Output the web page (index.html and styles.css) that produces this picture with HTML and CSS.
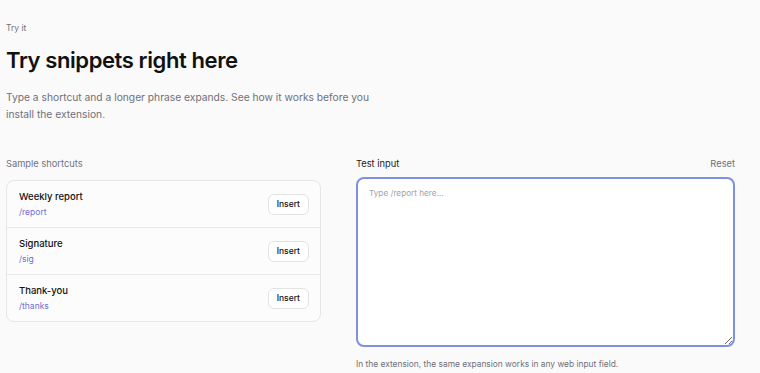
FILE: index.html
```html
<!DOCTYPE html>
<html lang="en">
<head>
    <meta charset="UTF-8">
    <meta name="viewport" content="width=device-width, initial-scale=1.0">
    <title>Try snippets</title>
    <link rel="stylesheet" href="styles.css">
</head>

<body>

<section class="intro">
    <p class="eyebrow">Try it</p>
    <h1>Try snippets right here</h1>
    <p class="lead">Type a shortcut and a longer phrase expands. See how it works before you install the extension.</p>
</section>

<section class="playground">
    <div class="samples">
        <div class="col-head">
            <span class="muted">Sample shortcuts</span>
        </div>
        <div class="shortcut-list">
            <div class="shortcut">
                <div>
                    <div class="shortcut-name">Weekly report</div>
                    <div class="shortcut-key">/report</div>
                </div>
                <button class="insert-button">Insert</button>
            </div>
            <div class="shortcut">
                <div>
                    <div class="shortcut-name">Signature</div>
                    <div class="shortcut-key">/sig</div>
                </div>
                <button class="insert-button">Insert</button>
            </div>
            <div class="shortcut">
                <div>
                    <div class="shortcut-name">Thank-you</div>
                    <div class="shortcut-key">/thanks</div>
                </div>
                <button class="insert-button">Insert</button>
            </div>
        </div>
    </div>

    <div class="tester">
        <div class="col-head">
            <span class="label">Test input</span>
            <button class="reset-button">Reset</button>
        </div>
        <textarea class="test-area" placeholder="Type /report here..."></textarea>
        <p class="hint">In the extension, the same expansion works in any web input field.</p>
    </div>
</section>

</body>
</html>
```

FILE: styles.css
```css
/* General Styles */
body {
    font-family: Inter, "Noto Sans", sans-serif;
    margin: 0;
    padding: 21px 25px 0 6px;
    background-color: #fafafa;
    color: #111;
}

.eyebrow {
    margin: 0;
    font-size: 8.5px;
    line-height: 14px;
    color: #6b6f7a;
}

h1 {
    margin: 11px 0 0;
    font-size: 22px;
    line-height: 28px;
    font-weight: 600;
    letter-spacing: -0.4px;
}

.lead {
    margin: 15px 0 0;
    max-width: 375px;
    font-size: 10.25px;
    line-height: 17px;
    color: #6f7079;
}

.playground {
    display: grid;
    grid-template-columns: 315px 1fr;
    gap: 35px;
    margin-top: 33px;
}

.col-head {
    display: flex;
    justify-content: space-between;
    align-items: center;
    height: 14px;
    font-size: 9.3px;
}

.muted {
    color: #707380;
}

.label {
    color: #1a1a1a;
}

.reset-button {
    border: none;
    background: none;
    padding: 0;
    font-family: inherit;
    font-size: 9.3px;
    color: #6f7079;
    cursor: pointer;
}

.shortcut-list {
    margin-top: 10px;
    border: 1px solid #e6e6e8;
    border-radius: 8px;
    background-color: #fcfcfc;
}

.shortcut {
    display: flex;
    justify-content: space-between;
    align-items: center;
    height: 46px;
    padding: 0 11px 0 12px;
    border-bottom: 1px solid #e9e9eb;
}

.shortcut:last-child {
    border-bottom: none;
}

.shortcut-name {
    font-size: 9.5px;
    line-height: 14px;
    font-weight: 500;
}

.shortcut-key {
    margin-top: 2px;
    font-size: 8.5px;
    line-height: 12px;
    color: #6f6fd0;
}

.insert-button {
    height: 21px;
    padding: 0 8px;
    border: 1px solid #e3e3e6;
    border-radius: 6px;
    background-color: #fff;
    font-family: inherit;
    font-size: 8.5px;
    font-weight: 500;
    color: #111;
    cursor: pointer;
}

.test-area {
    display: block;
    box-sizing: border-box;
    width: 100%;
    height: 170px;
    margin-top: 7px;
    padding: 9px 11px;
    border: 2px solid #7d90e2;
    border-radius: 8px;
    background-color: #fff;
    font-family: inherit;
    font-size: 8.2px;
    outline: none;
    resize: vertical;
}

.test-area::placeholder {
    color: #a3a3a8;
}

.hint {
    margin: 11px 0 0;
    font-size: 8.4px;
    line-height: 12px;
    color: #6f7079;
}
```
